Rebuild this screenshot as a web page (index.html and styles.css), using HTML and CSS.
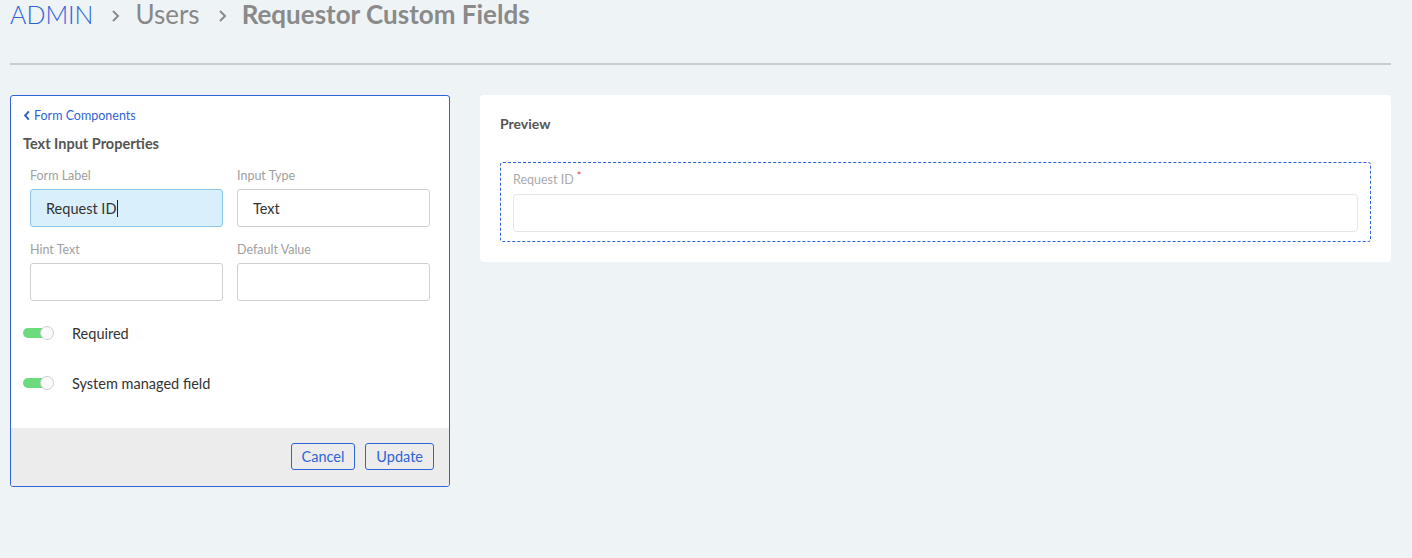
FILE: index.html
```html
<!DOCTYPE html>
<html lang="en">
<head>
<meta charset="utf-8">
<title>Requestor Custom Fields</title>
<link rel="stylesheet" href="styles.css">
</head>
<body>
<div class="page">
  <header class="crumbs">
    <span class="crumb-root">ADMIN</span>
    <svg class="crumb-sep" viewBox="0 0 10 14" width="10" height="14"><path d="M2 2l5 5-5 5" fill="none" stroke="#8a8a8a" stroke-width="2"/></svg>
    <span class="crumb">Users</span>
    <svg class="crumb-sep" viewBox="0 0 10 14" width="10" height="14"><path d="M2 2l5 5-5 5" fill="none" stroke="#8a8a8a" stroke-width="2"/></svg>
    <span class="crumb crumb-current">Requestor Custom Fields</span>
  </header>
  <div class="rule"></div>

  <main class="workspace">
    <section class="props">
      <div class="props-body">
        <a class="back-link"><svg viewBox="0 0 8 12" width="8" height="11"><path d="M6 1.5L2 6l4 4.5" fill="none" stroke="#2f64d6" stroke-width="2.2"/></svg>Form Components</a>
        <h2 class="props-title">Text Input Properties</h2>
        <div class="field-grid">
          <div class="field">
            <label class="field-label">Form Label</label>
            <div class="input input-active">Request ID<span class="caret"></span></div>
          </div>
          <div class="field">
            <label class="field-label">Input Type</label>
            <div class="input">Text</div>
          </div>
          <div class="field">
            <label class="field-label">Hint Text</label>
            <div class="input"></div>
          </div>
          <div class="field">
            <label class="field-label">Default Value</label>
            <div class="input"></div>
          </div>
        </div>
        <div class="toggle-row toggle-first">
          <span class="toggle"><span class="knob"></span></span>
          <span class="toggle-text">Required</span>
        </div>
        <div class="toggle-row">
          <span class="toggle"><span class="knob"></span></span>
          <span class="toggle-text">System managed field</span>
        </div>
      </div>
      <footer class="props-footer">
        <button class="btn">Cancel</button>
        <button class="btn">Update</button>
      </footer>
    </section>

    <section class="preview">
      <h2 class="preview-title">Preview</h2>
      <div class="preview-field">
        <label class="preview-label">Request ID<span class="req">*</span></label>
        <div class="preview-input"></div>
      </div>
    </section>
  </main>
</div>
</body>
</html>
```
FILE: styles.css
```css
* { box-sizing: border-box; }
html, body { margin: 0; padding: 0; }
body {
  background: #eef3f6;
  font-family: "Lato", "Noto Sans", "Liberation Sans", sans-serif;
  color: #333;
  width: 1412px;
  height: 558px;
  overflow: hidden;
}
.page { padding: 0 21px 0 10px; }

.crumbs {
  display: flex;
  align-items: center;
  height: 28px;
  line-height: 28px;
  font-size: 26px;
}
.crumb-root { color: #2f64d6; font-weight: 300; font-size: 25px; }
.crumb { color: #888; font-weight: 400; }
.crumb-current { font-weight: 700; color: #8a8a8a; }
.crumb-sep { margin: 3px 14px 0 18px; }

.rule {
  height: 2px;
  background: #c9cdcf;
  margin-top: 35px;
}

.workspace {
  display: flex;
  align-items: flex-start;
  gap: 30px;
  margin-top: 30px;
}

.props {
  width: 440px;
  height: 392px;
  background: #fff;
  border: 1px solid #2f64d6;
  border-radius: 3px;
  display: flex;
  flex-direction: column;
  overflow: hidden;
}
.props-body { flex: 1; padding: 11px 12px 0 12px; }
.back-link {
  display: flex;
  align-items: center;
  gap: 3px;
  font-size: 12.5px;
  color: #2f64d6;
  height: 16px;
}
.props-title {
  margin: 12px 0 0 0;
  font-size: 14.5px;
  font-weight: 700;
  color: #555;
  line-height: 18px;
}
.field-grid {
  display: grid;
  grid-template-columns: 193px 193px;
  column-gap: 14px;
  row-gap: 16px;
  padding-left: 7px;
  margin-top: 16px;
}
.field-label {
  display: block;
  font-size: 12.5px;
  color: #a0a0a0;
  line-height: 14px;
  margin-bottom: 6px;
}
.input {
  height: 38px;
  border: 1px solid #cfcfcf;
  border-radius: 3px;
  padding: 0 15px;
  display: flex;
  align-items: center;
  font-size: 14.5px;
  color: #333;
}
.input-active {
  background: #d9effb;
  border-color: #8fc4e9;
}
.caret {
  display: inline-block;
  width: 1px;
  height: 17px;
  background: #222;
  margin-left: 1px;
}
.toggle-row {
  display: flex;
  align-items: center;
  height: 16px;
  margin-top: 34px;
}
.toggle-row.toggle-first { margin-top: 24px; }
.toggle {
  position: relative;
  width: 31px;
  height: 14px;
  display: inline-block;
}
.toggle::before {
  content: "";
  position: absolute;
  left: 0;
  top: 2px;
  width: 24px;
  height: 10px;
  border-radius: 5px;
  background: #6bdb7d;
}
.knob {
  position: absolute;
  right: 0;
  top: 0;
  width: 14px;
  height: 14px;
  border-radius: 50%;
  background: #fafafa;
  border: 1px solid #c9cfd4;
}
.toggle-text { margin-left: 18px; font-size: 14.5px; color: #333; }

.props-footer {
  height: 58px;
  background: #ececec;
  display: flex;
  justify-content: flex-end;
  align-items: flex-start;
  gap: 10px;
  padding: 15px 15px 0 0;
}
.btn {
  height: 27px;
  padding: 0 10px;
  border: 1px solid #2f64d6;
  border-radius: 3px;
  background: transparent;
  color: #2f64d6;
  font-family: inherit;
  font-size: 14.5px;
}

.preview {
  flex: 1;
  height: 167px;
  background: #fff;
  border-radius: 4px;
  padding: 20px 20px 0 20px;
}
.preview-title {
  margin: 0;
  font-size: 14px;
  font-weight: 700;
  color: #555;
  line-height: 18px;
}
.preview-field {
  margin-top: 29px;
  height: 80px;
  border: 1px dashed #2f64d6;
  border-radius: 3px;
  padding: 9px 12px 0 12px;
}
.preview-label {
  display: flex;
  align-items: center;
  height: 16px;
  font-size: 12.5px;
  color: #aaa;
  line-height: 16px;
  margin-bottom: 6px;
}
.req {
  color: #e63c3c;
  font-size: 11px;
  line-height: 10px;
  margin-left: 3px;
  position: relative;
  top: -4px;
}
.preview-input {
  height: 38px;
  border: 1px solid #e6e6e6;
  border-radius: 4px;
}
```
